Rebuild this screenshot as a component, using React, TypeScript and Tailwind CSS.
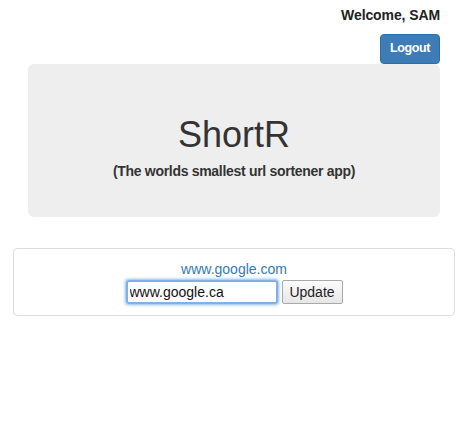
import React, { useState } from "react";

export default function App() {
  const [url, setUrl] = useState("www.google.ca");

  return (
    <div className="min-h-[444px] w-full bg-white text-[#333] font-['Liberation_Sans',Arial,sans-serif] text-sm">
      <div className="flex flex-col items-end pr-[29px] pt-[5px]">
        <div className="font-bold leading-5 tracking-[-0.1px] text-[#222]">Welcome, SAM</div>
        <button className="mt-[9px] h-[30px] w-[60px] rounded-[4px] border border-[#2e6da4] bg-[#3d7cb7] text-[12.5px] font-bold tracking-[-0.4px] text-white">
          Logout
        </button>
      </div>

      <div className="mx-[28px] mr-[29px] mt-0 flex flex-col items-center rounded-[6px] bg-[#eee] pt-[51px] pb-[38px]">
        <h1 className="text-[36px] leading-[40px] font-normal text-[#333]">ShortR</h1>
        <h5 className="mt-[9px] text-sm leading-[15px] font-bold tracking-[-0.3px] text-[#333]">
          (The worlds smallest url sortener app)
        </h5>
      </div>

      <div className="ml-[13px] mr-[14px] mt-[31px] flex flex-col items-center rounded-[4px] border border-[#ddd] pt-[10px] pb-[11px]">
        <a href="#" className="leading-5 text-[#337ab7]">www.google.com</a>
        <form className="mt-px flex items-center gap-[4px]" onSubmit={(e) => e.preventDefault()}>
          <input
            value={url}
            onChange={(e) => setUrl(e.target.value)}
            className="h-[24px] w-[152px] rounded-[3px] border-2 border-[#7fb0e6] px-[2px] text-sm text-[#111] shadow-[0_0_3px_1px_rgba(90,155,230,0.7)] outline-none"
          />
          <button
            type="submit"
            className="h-[24px] w-[61px] rounded-[2px] border border-[#a9a9a9] bg-gradient-to-b from-[#fcfcfc] to-[#e6e6e6] text-sm text-[#222]"
          >
            Update
          </button>
        </form>
      </div>
    </div>
  );
}
